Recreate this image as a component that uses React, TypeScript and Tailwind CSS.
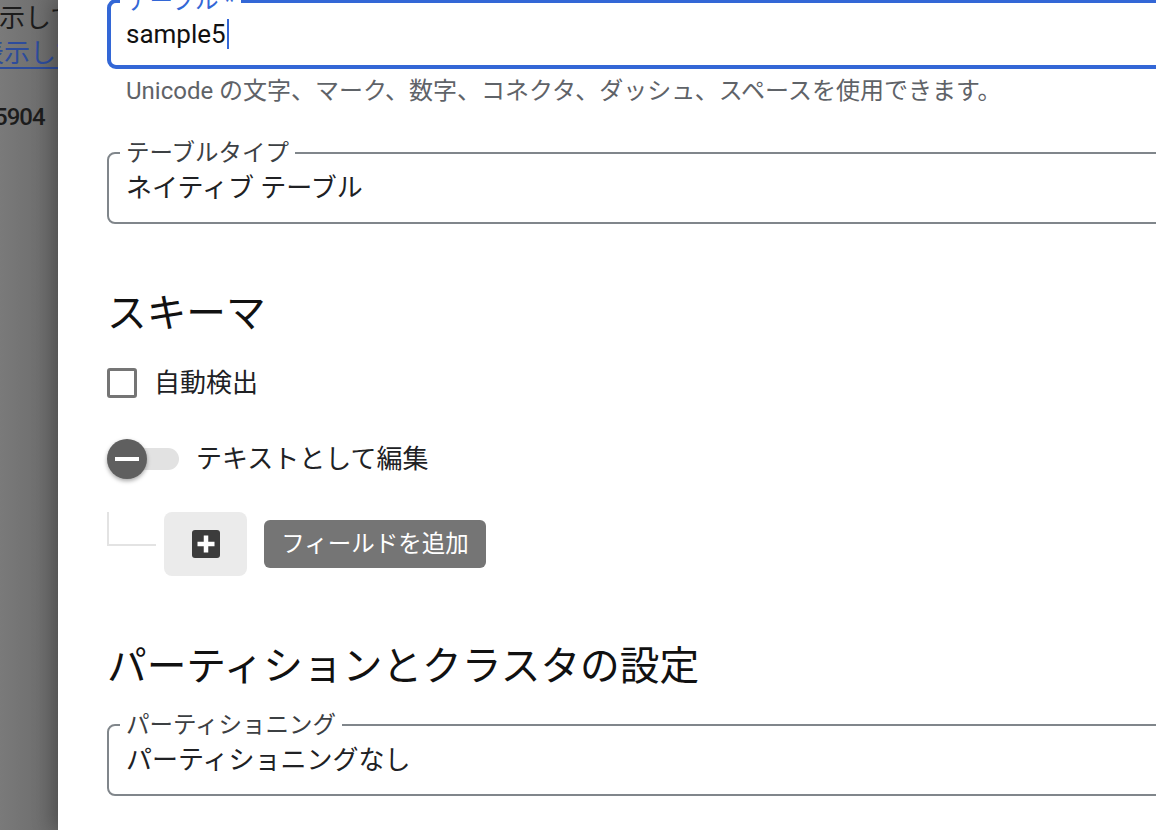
import React from "react";

function OutlinedField({
    label,
    value,
    focused = false,
}: {
    label: string;
    value: React.ReactNode;
    focused?: boolean;
}) {
    if (focused) {
        return (
            <div className="relative -mt-[1px] flex h-[70px] w-[1100px] items-center rounded-[9px] border-4 border-[#3367d6] pl-[15px]">
                <span className="absolute left-[9px] top-[-14px] bg-white px-[6px] text-[23.5px] leading-[24px] text-[#3367d6]">
                    {label}
                </span>
                {value}
            </div>
        );
    }
    return (
        <div className="relative flex h-[72px] w-[1100px] items-center rounded-[8px] border-2 border-[#80868b] pl-[17px]">
            <span className="absolute left-[11px] top-[-13px] bg-white px-[6px] text-[23.5px] leading-[24px] text-[#3c4043]">
                {label}
            </span>
            <span className="text-[26px] leading-[32px] text-[#202124]">{value}</span>
        </div>
    );
}

function PlusIcon() {
    return (
        <svg width="28" height="28" viewBox="0 0 28 28">
            <rect width="28" height="28" rx="3" fill="#3c3c3c" />
            <path d="M14 5.5v17M5.5 14h17" stroke="#ffffff" strokeWidth="4.5" />
        </svg>
    );
}

export default function App() {
    return (
        <div className="flex h-[830px] w-[1156px] overflow-hidden bg-white font-['Roboto','Noto_Sans_CJK_JP',sans-serif]">
            {/* page behind the side panel, under the scrim */}
            <div className="w-[58px] shrink-0 overflow-hidden whitespace-nowrap bg-linear-to-r from-[#7a7a7a] to-[#6a6a6a] pt-[2px] text-[26px] leading-[32px] text-[#1c1c1c]">
                <div className="-ml-[1px]">示して</div>
                <div className="-ml-[22px] mt-[3px] text-[#2d4c9c] underline decoration-[1.5px] underline-offset-[5px]">
                    表示して
                </div>
                <div className="-ml-[6px] mt-[32px] text-[24px] font-medium tracking-[-1px]">5904</div>
            </div>

            {/* side panel */}
            <div className="relative z-10 flex-1 overflow-hidden bg-white shadow-[-6px_0_18px_rgba(0,0,0,0.25)]">
                <div className="flex w-[1200px] flex-col pl-[49px]">
                    <OutlinedField
                        focused
                        label="テーブル *"
                        value={
                            <span className="flex items-center text-[26px] leading-[32px] text-[#111]">
                                sample5
                                <span className="ml-[1px] inline-block h-[30px] w-[2px] bg-[#3367d6]" />
                            </span>
                        }
                    />
                    <p className="mt-[8px] pl-[19px] text-[24px] leading-[28px] text-[#5f6368]">
                        Unicode の文字、マーク、数字、コネクタ、ダッシュ、スペースを使用できます。
                    </p>

                    <div className="mt-[47px]">
                        <OutlinedField label="テーブルタイプ" value="ネイティブ テーブル" />
                    </div>

                    <h2 className="mt-[66px] text-[39.7px] leading-[48px] text-[#111]">スキーマ</h2>

                    <label className="mt-[30px] flex h-[30px] items-center">
                        <span className="h-[30px] w-[30px] rounded-[3px] border-[3px] border-[#757575]" />
                        <span className="ml-[17px] text-[26px] leading-[32px] text-[#202124]">自動検出</span>
                    </label>

                    <div className="mt-[40px] flex h-[42px] items-center">
                        <div className="relative h-[42px] w-[72px]">
                            <div className="absolute left-[6px] top-[10px] h-[22px] w-[66px] rounded-full bg-[#e2e2e2]" />
                            <div className="absolute left-0 top-[1px] flex h-[40px] w-[40px] items-center justify-center rounded-full bg-[#5f5f5f] shadow-[0_2px_4px_rgba(0,0,0,0.35)]">
                                <span className="h-[4px] w-[24px] bg-white" />
                            </div>
                        </div>
                        <span className="ml-[17px] text-[26px] leading-[32px] text-[#202124]">
                            テキストとして編集
                        </span>
                    </div>

                    <div className="mt-[32px] flex items-start">
                        <div className="h-[34px] w-[49px] border-b-2 border-l-2 border-[#e3e3e3]" />
                        <button className="ml-[8px] flex h-[64px] w-[83px] items-center justify-center rounded-[8px] bg-[#ebebeb]">
                            <PlusIcon />
                        </button>
                        <div className="ml-[17px] mt-[8px] flex h-[48px] w-[222px] items-center justify-center rounded-[6px] bg-[#757575] text-[23.5px] leading-[28px] text-white">
                            フィールドを追加
                        </div>
                    </div>

                    <h2 className="mt-[67px] text-[39.7px] leading-[48px] text-[#111]">
                        パーティションとクラスタの設定
                    </h2>

                    <div className="mt-[33px]">
                        <OutlinedField label="パーティショニング" value="パーティショニングなし" />
                    </div>
                </div>
            </div>
        </div>
    );
}
